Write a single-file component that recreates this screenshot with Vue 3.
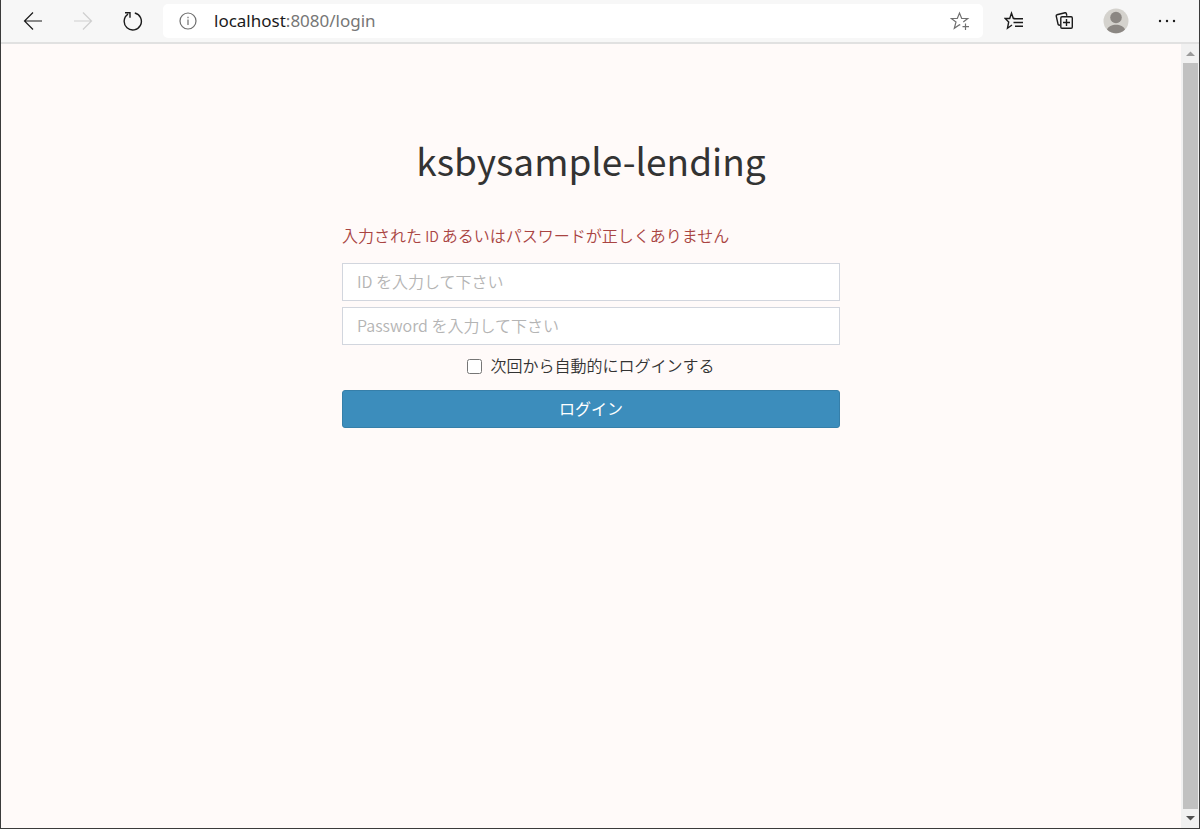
<script setup>
import { ref } from 'vue'

const userId = ref('')
const password = ref('')
const remember = ref(false)
</script>

<template>
  <div class="window">
    <header class="toolbar">
      <nav class="nav" aria-label="Navigation">
        <button type="button" class="tool" aria-label="Back">
          <svg width="20" height="20" viewBox="0 0 20 20"><path d="M19 10H1.500M10 1.500 1.500 10l8.500 8.500" /></svg>
        </button>
        <button type="button" class="tool faded" aria-label="Forward" disabled>
          <svg width="20" height="20" viewBox="0 0 20 20"><path d="M1 10h17.500M10 1.500l8.500 8.500-8.500 8.500" /></svg>
        </button>
        <button type="button" class="tool" aria-label="Reload">
          <svg width="20" height="20" viewBox="0 0 20 20"><path class="thick" d="M11.800 2A8.600 8.600 0 1 1 5 3.200M2 1.800h5v5" /></svg>
        </button>
      </nav>
      <div class="address">
        <svg class="info" width="18" height="18" viewBox="0 0 18 18"><circle cx="9" cy="9" r="8" /><path d="M9 7.500v5.500M9 4.800v1.400" /></svg>
        <a class="url" href="#"><span class="host">localhost</span>:8080/login</a>
        <button type="button" class="tool star" aria-label="Add to favorites">
          <svg width="20" height="20" viewBox="0 0 20 20"><path d="M10.300 14.200 9.500 13.800 4.300 17.300 6 11 1.300 7.500h6L9.500 2l2.200 5.500h6L13.300 11M15.500 12.500v6.500M12.500 15.700H19" /></svg>
        </button>
      </div>
      <div class="actions">
        <button type="button" class="tool" aria-label="Favorites">
          <svg width="20" height="20" viewBox="0 0 20 20"><path class="thick" d="M11.500 7.800 9.300 7.300 7.500 2.200 5.700 7.500H1.200L4.700 11 3.500 17.200 8 14M9.500 7.700H19M9.500 11.500H19M11 15.300h8" /></svg>
        </button>
        <button type="button" class="tool" aria-label="Collections">
          <svg width="20" height="20" viewBox="0 0 20 20"><path class="thick" d="M5 14.200 3.800 14Q3.200 13.900 3 13L1.200 5Q1.100 4 2 3.800L10 1.800q1-.2 1.300.7l.6 2.300" /><rect class="thick" x="5.800" y="5.800" width="11.500" height="11.500" rx="1.200" /><path class="thick" d="M11.500 8v7M8 11.500h7" /></svg>
        </button>
        <button type="button" class="tool" aria-label="Profile">
          <svg class="avatar" width="26" height="26" viewBox="0 0 26 26"><circle cx="13" cy="13" r="12.500" fill="#d4d2cd" /><circle cx="13" cy="9.500" r="5.800" fill="#8b8783" /><path d="M4 21.500c2-6.500 16-6.500 18 0a12.500 12.500 0 0 1-18 0" fill="#8b8783" /></svg>
        </button>
        <button type="button" class="tool" aria-label="Settings and more">
          <svg class="dots" width="20" height="20" viewBox="0 0 20 20"><circle cx="3" cy="10" r="1.200" /><circle cx="10" cy="10" r="1.200" /><circle cx="17" cy="10" r="1.200" /></svg>
        </button>
      </div>
    </header>

    <div class="viewport">
      <main class="page">
        <form class="login" @submit.prevent>
          <h1>ksbysample-lending</h1>
          <p class="error" role="alert">入力された<span class="latin"> ID </span>あるいはパスワードが正しくありません</p>
          <input v-model="userId" class="field" type="text" aria-label="ID" placeholder="ID を入力して下さい">
          <input v-model="password" class="field" type="password" aria-label="Password" placeholder="Password を入力して下さい">
          <label class="remember" for="remember">
            <input id="remember" v-model="remember" type="checkbox">
            <span>次回から自動的にログインする</span>
          </label>
          <button class="submit" type="submit">ログイン</button>
        </form>
      </main>
      <div class="scrollbar" aria-hidden="true">
        <svg width="18" height="19" viewBox="0 0 18 19"><path d="M5 12h9L9.500 7.500z" fill="#9b9b9b" /></svg>
        <div class="thumb"></div>
        <svg width="18" height="19" viewBox="0 0 18 19"><path d="M5 7h9l-4.500 4.500z" fill="#505050" /></svg>
      </div>
    </div>
  </div>
</template>

<style>
body {
  margin: 0;
}
</style>

<style scoped>
* {
  box-sizing: border-box;
}

.window {
  display: flex;
  flex-direction: column;
  min-height: 100vh;
  border: 1px solid #3b3b3b;
  border-top: 0;
  background: #fffaf9;
  color: #333;
  font-family: "Noto Sans CJK JP", sans-serif;
  font-size: 16px;
}

.toolbar {
  display: flex;
  align-items: center;
  height: 44px;
  border-bottom: 2px solid #e1e1e1;
  background: #f7f7f7;
}

.nav,
.actions {
  display: flex;
  align-items: center;
}

.nav {
  gap: 20px;
  padding: 0 15px 0 17px;
}

.actions {
  gap: 21px;
  padding: 0 17px 0 16px;
}

.tool {
  display: flex;
  align-items: center;
  justify-content: center;
  width: 30px;
  height: 30px;
  padding: 0;
  border: 0;
  background: none;
  color: #1b1b1b;
}

.tool svg,
.info {
  flex: none;
  fill: none;
  stroke: currentColor;
  stroke-width: 1.2;
}

.tool .thick {
  stroke-width: 1.4;
}

.tool .avatar {
  stroke: none;
}

.tool .dots {
  fill: currentColor;
  stroke: none;
}

.faded {
  color: #cfcfcf;
}

.address {
  display: flex;
  flex: 1;
  align-items: center;
  height: 34px;
  padding: 0 8px 0 16px;
  border-radius: 5px;
  background: #fff;
}

.info {
  color: #6e6e6e;
}

.url {
  flex: 1;
  margin-left: 17px;
  color: #767676;
  font-family: "Noto Sans", sans-serif;
  font-size: 17px;
  line-height: 24px;
  text-decoration: none;
}

.host {
  color: #1b1b1b;
}

.star {
  color: #707070;
}

.viewport {
  display: flex;
  flex: 1;
}

.page {
  flex: 1;
  padding: 86px 16px 32px;
}

.login {
  display: flex;
  flex-direction: column;
  max-width: 498px;
  margin: 0 auto;
}

h1 {
  margin: 0 0 33px;
  font-size: 37px;
  font-weight: 400;
  line-height: 60px;
  text-align: center;
}

.error {
  margin: 0 0 15px;
  color: #a94442;
  font-weight: 350;
  line-height: 24px;
}

.latin {
  font-size: 14px;
}

.field {
  width: 100%;
  height: 38px;
  margin: 0 0 6px;
  padding: 0 14px 3px;
  border: 1px solid #d2d6de;
  border-radius: 0;
  background: #fff;
  color: #555;
  font: inherit;
}

.field::placeholder {
  color: #b4b4b4;
  font-weight: 350;
  opacity: 1;
}

.remember {
  display: flex;
  align-items: center;
  align-self: center;
  gap: 8px;
  margin: 2px 0 13px;
  font-weight: 350;
  line-height: 24px;
}

.remember input {
  width: 15px;
  height: 15px;
  margin: 2px 0 0;
}

.submit {
  height: 38px;
  padding: 0 0 2px;
  border: 1px solid #367fa9;
  border-radius: 3px;
  background: #3c8dbc;
  color: #fff;
  font: inherit;
}

.scrollbar {
  display: flex;
  flex-direction: column;
  width: 18px;
  background: #f1f1f1;
}

.thumb {
  flex: 1;
  margin: 0 1px 0 2px;
  background: #c1c1c1;
}
</style>
